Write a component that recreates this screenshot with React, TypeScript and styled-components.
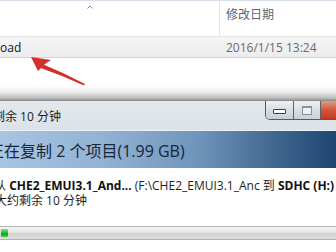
import React from "react";
import styled, { createGlobalStyle } from "styled-components";

const Global = createGlobalStyle`
  html, body { margin: 0; padding: 0; background: #fff; }
  body {
    width: 336px; height: 252px; overflow: hidden;
    font-family: "Open Sans", "Noto Sans CJK SC", sans-serif;
  }
`;

const Page = styled.div`
  width: 336px;
  height: 252px;
  overflow: hidden;
  display: flex;
  flex-direction: column;
  background: #fff;
`;

/* ---------- Explorer ---------- */
const Explorer = styled.section`
  position: relative;
  height: 101px;
  flex: none;
  display: flex;
  flex-direction: column;
`;

const HeaderRow = styled.div`
  height: 35px;
  border-top: 1px solid #d6dee8;
  border-bottom: 1px solid #e4e4e4;
  display: grid;
  grid-template-columns: 219px 1fr;
`;

const NameHeader = styled.div`
  display: flex;
  padding: 4px 0 0 87px;
`;

const DateHeader = styled.div`
  border-left: 1px solid #e1e5ea;
  padding: 6px 0 0 6px;
  font-size: 12px;
  line-height: 16px;
  color: #5a6472;
`;

const FileRow = styled.div`
  height: 20px;
  display: grid;
  grid-template-columns: 219px 1fr;
  align-items: center;
  background: linear-gradient(#f5f5f5, #ececec);
  border-bottom: 1px solid #d2d2d2;
  font-size: 12px;
`;

const FileName = styled.span`
  color: #111;
`;

const FileDate = styled.span`
  color: #6b6b6b;
  padding-left: 7px;
`;

const Blank = styled.div`
  flex: 1;
  background: linear-gradient(
    to bottom,
    #fff 0%,
    #fff 66%,
    #e8e8e8 80%,
    #bdbdbd 93%,
    #858585 100%
  );
`;

const Annotation = styled.svg`
  position: absolute;
  left: 0;
  top: 0;
  pointer-events: none;
`;

/* ---------- Copy dialog ---------- */
const Dialog = styled.section`
  flex: 1;
  display: flex;
  flex-direction: column;
`;

const TitleBar = styled.div`
  height: 29px;
  flex: none;
  display: flex;
  justify-content: space-between;
  align-items: flex-start;
  background: linear-gradient(#e4e8ed, #dce2e9);
  border-bottom: 1px solid #eef1f5;
`;

const TitleText = styled.span`
  margin: 8px 0 0 -7px;
  font-size: 12px;
  line-height: 16px;
  color: #1c1c1c;
  white-space: nowrap;
`;

const WinButtons = styled.div`
  display: flex;
  height: 18px;
  margin-right: -16px;
  border: 1px solid #555b62;
  border-top: none;
  border-radius: 0 0 0 5px;
  overflow: hidden;
`;

const WinButton = styled.div<{ $w: number; $close?: boolean }>`
  width: ${(p) => p.$w}px;
  display: flex;
  align-items: center;
  justify-content: center;
  background: ${(p) =>
    p.$close
      ? "linear-gradient(#e39a82, #d0573c 50%, #c23a20)"
      : "linear-gradient(#eef1f4, #d9dee4 50%, #c9d0d8)"};
  & + & {
    border-left: 1px solid #5d636a;
  }
`;

const MinGlyph = styled.span`
  width: 11px;
  height: 3px;
  margin-top: 3px;
  background: #fff;
  border: 1px solid #3a3f45;
  border-radius: 1px;
`;

const MaxGlyph = styled.span`
  width: 8px;
  height: 6px;
  border: 1px solid #8a9099;
  border-top-width: 2px;
  background: rgba(255, 255, 255, 0.6);
`;

const Banner = styled.div`
  height: 37px;
  flex: none;
  display: flex;
  align-items: center;
  background: linear-gradient(
    to right,
    #a8c5e2 0%,
    #93b3d4 30%,
    #6e93b9 60%,
    #3f668f 82%,
    #1f4670 100%
  );
`;

const BannerText = styled.span`
  margin-left: -12px;
  font-size: 16px;
  color: #16263b;
  white-space: nowrap;
`;

const Body = styled.div`
  padding-top: 10px;
  display: flex;
  flex-direction: column;
`;

const Line = styled.div<{ $shift: number }>`
  margin-left: ${(p) => p.$shift}px;
  font-size: 12px;
  line-height: 15px;
  color: #1e1e1e;
  white-space: nowrap;
  overflow: hidden;
`;

const Strong = styled.b`
  font-weight: 700;
  color: #111;
`;

const Progress = styled.div`
  margin: 18px -4px 0 -2px;
  height: 8px;
  border: 1px solid #b3b3b3;
  border-radius: 2px;
  padding: 2px 0 2px 2px;
  display: flex;
  background: linear-gradient(#f4f4f4, #e4e4e4 45%, #d2d2d2 55%, #dedede);
`;

const Fill = styled.div`
  height: 100%;
  background: linear-gradient(#7fe07f, #2ec12e 45%, #18a018 60%, #3fcf3f);
  border-radius: 1px;
`;

export default function App() {
  const progress = 7;
  return (
    <Page>
      <Global />
      <Explorer>
        <HeaderRow>
          <NameHeader>
            <svg width="6" height="4" viewBox="0 0 6 4">
              <path d="M0.5 3.5 L3 1 L5.5 3.5" fill="none" stroke="#7d8a99" strokeWidth="1" />
            </svg>
          </NameHeader>
          <DateHeader>修改日期</DateHeader>
        </HeaderRow>
        <FileRow>
          <FileName>oad</FileName>
          <FileDate>2016/1/15 13:24</FileDate>
        </FileRow>
        <Blank />
        <Annotation width="100" height="90" viewBox="0 0 100 90">
          <path d="M40 63 Q62 72 85 84 L84 85.5 Q61 75 38 67 Z" fill="#d3302c" />
          <path d="M31 57 L51 60 L45 64 L38 71 Z" fill="#d3302c" />
        </Annotation>
      </Explorer>
      <Dialog>
        <TitleBar>
          <TitleText>剩余 10 分钟</TitleText>
          <WinButtons>
            <WinButton $w={27}>
              <MinGlyph />
            </WinButton>
            <WinButton $w={26}>
              <MaxGlyph />
            </WinButton>
            <WinButton $w={30} $close />
          </WinButtons>
        </TitleBar>
        <Banner>
          <BannerText>正在复制 2 个项目(1.99 GB)</BannerText>
        </Banner>
        <Body>
          <Line $shift={-6}>
            从 <Strong>CHE2_EMUI3.1_And...</Strong> (F:\CHE2_EMUI3.1_Anc 到{" "}
            <Strong>SDHC (H:)</Strong>
          </Line>
          <Line $shift={-5}>大约剩余 10 分钟</Line>
          <Progress>
            <Fill style={{ width: `${progress}px` }} />
          </Progress>
        </Body>
      </Dialog>
    </Page>
  );
}
